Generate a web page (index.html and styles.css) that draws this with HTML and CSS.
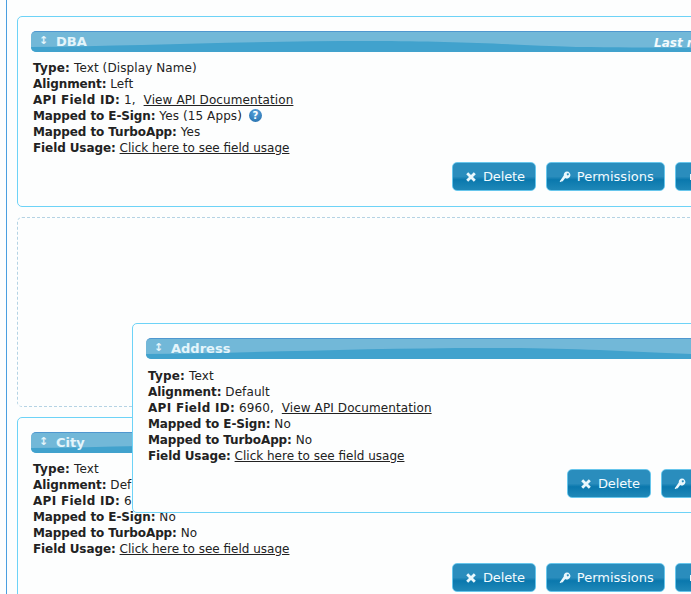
FILE: index.html
```html
<!DOCTYPE html>
<html lang="en">
<head>
<meta charset="utf-8">
<title>Fields</title>
<link rel="stylesheet" href="styles.css">
</head>
<body>
<svg class="sprites" width="0" height="0" aria-hidden="true">
  <symbol id="wave" viewBox="0 0 900 21" preserveAspectRatio="none">
    <path d="M0 16C110 15 220 10 340 10C420 10 470 13 545 16C650 17 780 17 900 17V21H0Z"/>
  </symbol>
  <symbol id="i-x" viewBox="0 0 12 12">
    <path d="M3.200 1.200 6 4l2.800-2.800 2 2L8 6l2.800 2.800-2 2L6 8l-2.800 2.800-2-2L4 6 1.200 3.200Z"/>
  </symbol>
  <symbol id="i-key" viewBox="0 0 12 12">
    <path fill-rule="evenodd" d="M8 .6a3.400 3.400 0 1 1-1.800 6.300L3.600 10.600 2.800 10.100 2.100 11.200.6 10.400 4.800 4.600A3.400 3.400 0 0 1 8 .6ZM8.800 2.300a1 1 0 1 0 .01 0Z"/>
  </symbol>
  <symbol id="i-copy" viewBox="0 0 12 12">
    <path d="M2 3h1v6H2ZM4 4h7v7H4Z"/>
  </symbol>
</svg>
<div class="frame">
  <section class="card">
    <header class="bar">
      <svg class="wave"><use href="#wave"/></svg>
      <span class="grip">↕</span><h2>DBA</h2>
      <em class="modified">Last modified</em>
    </header>
    <div class="info">
      <div><b class="wide">Type:</b> Text (Display Name)</div>
      <div><b>Alignment:</b> Left</div>
      <div><b class="wider">API Field ID:</b> 1,&nbsp; <a href="#">View API Documentation</a></div>
      <div><b>Mapped to E-Sign:</b> Yes (15 Apps) <span class="help">?</span></div>
      <div><b>Mapped to TurboApp:</b> Yes</div>
      <div><b>Field Usage:</b> <a class="usage" href="#">Click here to see field usage</a></div>
    </div>
    <div class="actions">
      <button class="btn btn-del"><svg class="ico"><use href="#i-x"/></svg>Delete</button>
      <button class="btn"><svg class="ico"><use href="#i-key"/></svg>Permissions</button>
      <button class="btn"><svg class="ico"><use href="#i-copy"/></svg>Copy</button>
    </div>
  </section>
  <div class="slot"></div>
  <section class="card">
    <header class="bar bar-short">
      <svg class="wave"><use href="#wave"/></svg>
      <span class="grip">↕</span><h2>City</h2>
    </header>
    <div class="info">
      <div><b class="wide">Type:</b> Text</div>
      <div><b>Alignment:</b> Default</div>
      <div><b class="wider">API Field ID:</b> 6961,&nbsp; <a href="#">View API Documentation</a></div>
      <div><b>Mapped to E-Sign:</b> No</div>
      <div><b>Mapped to TurboApp:</b> No</div>
      <div><b>Field Usage:</b> <a class="usage" href="#">Click here to see field usage</a></div>
    </div>
    <div class="actions">
      <button class="btn btn-del"><svg class="ico"><use href="#i-x"/></svg>Delete</button>
      <button class="btn"><svg class="ico"><use href="#i-key"/></svg>Permissions</button>
      <button class="btn"><svg class="ico"><use href="#i-copy"/></svg>Copy</button>
    </div>
  </section>
</div>
<section class="card dragging">
  <header class="bar">
    <svg class="wave"><use href="#wave"/></svg>
    <span class="grip">↕</span><h2>Address</h2>
  </header>
  <div class="info">
    <div><b class="wide">Type:</b> Text</div>
    <div><b>Alignment:</b> Default</div>
    <div><b class="wider">API Field ID:</b> 6960,&nbsp; <a href="#">View API Documentation</a></div>
    <div><b>Mapped to E-Sign:</b> No</div>
    <div><b>Mapped to TurboApp:</b> No</div>
    <div><b>Field Usage:</b> <a class="usage" href="#">Click here to see field usage</a></div>
  </div>
  <div class="actions">
    <button class="btn btn-del"><svg class="ico"><use href="#i-x"/></svg>Delete</button>
    <button class="btn"><svg class="ico"><use href="#i-key"/></svg>Permissions</button>
  </div>
</section>
</body>
</html>
```
FILE: styles.css
```css
html, body { margin: 0; height: 100%; overflow: hidden; }
body {
  position: relative;
  background: #fdfefe;
  color: #222;
  font: 12px/16px "DejaVu Sans", Verdana, sans-serif;
}
.sprites { position: absolute; }
.frame {
  margin-left: 6px;
  border-left: 1px solid #4a9fe0;
  padding: 16px 0 0 10px;
  height: 100%;
  width: 900px;
  box-sizing: border-box;
}
.card {
  width: 900px;
  height: 191px;
  box-sizing: border-box;
  border: 1px solid #6dd3f7;
  border-radius: 5px 0 0 5px;
  padding: 14px 13px;
  margin-bottom: 10px;
  background: #fdfefe;
}
.slot {
  width: 900px;
  height: 190px;
  box-sizing: border-box;
  border: 1px dashed #b5d3e4;
  border-radius: 5px 0 0 5px;
  margin-bottom: 10px;
}
.dragging {
  position: absolute;
  left: 132px;
  top: 323px;
  height: 190px;
  margin: 0;
}
.dragging .info { padding-top: 9px; }
.dragging .actions { margin-top: 5px; }
.bar {
  position: relative;
  height: 21px;
  display: flex;
  align-items: center;
  border-top: 1px solid #4f97cf;
  box-sizing: border-box;
  border-radius: 5px 0 0 5px;
  background: #72b8d8;
  color: #e4f5fb;
  overflow: hidden;
  padding-left: 8px;
}
.bar-short { width: 300px; }
.wave {
  position: absolute;
  left: 0;
  top: -1px;
  width: 900px;
  height: 21px;
  fill: #41a2cd;
}
.grip {
  position: relative;
  width: 17px;
  font-size: 11px;
  font-weight: bold;
  margin-top: -2px;
}
.bar h2 {
  position: relative;
  margin: 0;
  font-size: 13px;
  font-weight: bold;
  margin-top: -1px;
}
.modified {
  position: absolute;
  left: 623px;
  top: 3px;
  font-size: 12px;
  font-weight: bold;
  color: #f2fafd;
}
.info { padding: 8px 0 0 2px; letter-spacing: .1px; }
.info b { letter-spacing: -.1px; }
.info b.wide { letter-spacing: .2px; }
.info b.wider { letter-spacing: .3px; }
.info a { color: #222; text-decoration: underline; }
.info a.usage { letter-spacing: 0; }
.help {
  display: inline-block;
  width: 13px;
  height: 13px;
  margin-left: 3px;
  border-radius: 50%;
  background: radial-gradient(circle at 50% 30%, #5aa3dc, #1f6aa8);
  color: #fff;
  font-size: 10px;
  font-weight: bold;
  line-height: 13px;
  text-align: center;
  letter-spacing: 0;
  vertical-align: 1px;
}
.actions {
  display: flex;
  gap: 10px;
  margin: 6px 0 0 421px;
}
.btn {
  display: flex;
  align-items: center;
  height: 29px;
  padding: 0 10px 0 12px;
  border: 1px solid #67c6ec;
  border-radius: 5px;
  background: linear-gradient(#2a8dbd 0 50%, #0a78ad 62%, #1f88b8 100%);
  color: #f2fbff;
  font: 13px "DejaVu Sans", Verdana, sans-serif;
  white-space: nowrap;
}
.btn-del { letter-spacing: -.15px; }
.ico { width: 12px; height: 12px; margin-right: 6px; fill: #eaf8fd; flex: none; }
```
